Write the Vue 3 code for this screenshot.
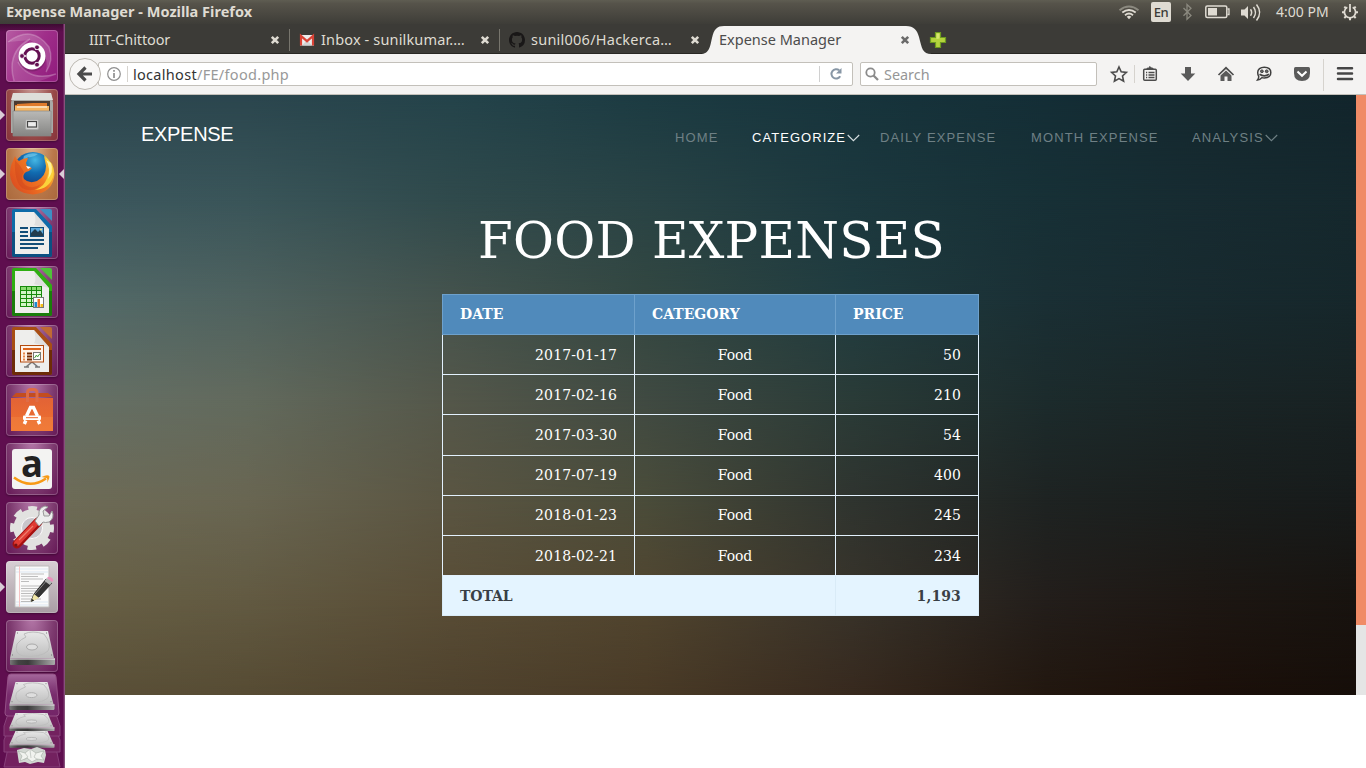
<script setup>
const rows = [
  ['2017-01-17', '50'],
  ['2017-02-16', '210'],
  ['2017-03-30', '54'],
  ['2017-07-19', '400'],
  ['2018-01-23', '245'],
  ['2018-02-21', '234'],
]
const tabs = [
  { title: 'IIIT-Chittoor', icon: '' },
  { title: 'Inbox - sunilkumar.…', icon: 'gmail' },
  { title: 'sunil006/Hackerca…', icon: 'github' },
  { title: 'Expense Manager', icon: '', active: true },
]
const tiles = [
  { name: 'dash' },
  { name: 'files', left: true },
  { name: 'firefox', left: true, right: true },
  { name: 'writer' },
  { name: 'calc' },
  { name: 'impress' },
  { name: 'software' },
  { name: 'amazon' },
  { name: 'settings' },
  { name: 'gedit', left: true },
  { name: 'disk' },
]
const docs = {
  writer: ['#0e6ba8', '#0b4a78', '#3e8fc4'],
  calc: ['#2fae12', '#15700a', '#4fc23a'],
  impress: ['#a84e14', '#5e2404', '#c06a34'],
}
</script>

<template>
  <div class="desktop">
    <header class="panel">
      <span class="window-title">Expense Manager - Mozilla Firefox</span>
      <svg class="tray" width="250" height="24" viewBox="0 0 250 24">
        <g fill="none" stroke-width="1.9">
          <path d="M3.5 10.2Q13 2.8 22.500 10.200" stroke="#8b897f" />
          <path d="M6.300 12.600Q13 7.300 19.700 12.600" stroke="#dfdbd2" />
          <path d="M9 15.200Q13 12 17 15.200" stroke="#dfdbd2" />
        </g>
        <path d="M10.700 16.700Q13 15 15.300 16.700L13 19.200Z" fill="#dfdbd2" />
        <rect x="35" y="2" width="20" height="20" rx="2" fill="#dfdbd2" />
        <path d="M67.500 8L75 15.500L71 19.300V4.500L75 8.300L67.500 15.800" fill="none" stroke="#8b897f" stroke-width="1.300" />
        <rect x="89.800" y="6" width="21" height="11.500" rx="1.500" fill="none" stroke="#dfdbd2" stroke-width="1.500" />
        <rect x="92" y="8" width="9" height="7.500" fill="#dfdbd2" />
        <path d="M111.500 9h1.500v5.500h-1.500" fill="none" stroke="#dfdbd2" stroke-width="1.300" />
        <path d="M125 9.500h3.500L132 6v13l-3.500-3.500H125Z" fill="#dfdbd2" />
        <g fill="none" stroke="#dfdbd2" stroke-width="1.500">
          <path d="M134.500 9.300Q136.800 12.500 134.500 15.700" />
          <path d="M137.500 7Q141.500 12.500 137.500 18" />
          <path d="M140.500 4.500Q146.800 12.500 140.500 20.500" />
        </g>
        <g fill="none" stroke="#dfdbd2">
          <path d="M231.300 7.300A5.600 5.600 0 1 0 236.700 7.300" stroke-width="1.700" />
          <path d="M234 4V12" stroke-width="1.800" />
          <path d="M226 12.300h2.500M239.500 12.300h2.500M228.300 6.600l2 2M239.700 6.600l-2 2M228.300 18l2-2M239.700 18l-2-2M234 17.500v2.700" stroke-width="2" />
        </g>
      </svg>
      <span class="lang">En</span>
      <span class="clock">4:00 PM</span>
    </header>

    <div class="workspace">
      <aside class="launcher">
        <div v-for="t in tiles" :key="t.name" class="tile" :class="t.name">
          <i v-if="t.left" class="pip left"></i>
          <i v-if="t.right" class="pip right"></i>
          <svg width="52" height="52" viewBox="0 0 52 52">
            <template v-if="t.name === 'dash'">
              <g fill="none" stroke="#fff" stroke-opacity=".22" stroke-width="1.500">
                <path d="M2 12Q26 -6 43 17Q48 30 40 42" />
                <path d="M8 51Q0 22 24 9" />
                <path d="M50 44Q24 52 12 32" />
              </g>
              <path d="M2 12Q26 -6 43 17Q48 30 40 42Q44 20 24 10Z" fill="#fff" fill-opacity=".16" />
              <path d="M8 51Q0 22 24 9Q10 22 14 36Q24 50 50 44Q30 56 8 51Z" fill="#fff" fill-opacity=".12" />
              <circle cx="26" cy="27.500" r="14" fill="#000" fill-opacity=".15" />
              <circle cx="26" cy="26" r="13.500" fill="#fff" />
              <circle cx="26" cy="26" r="7.200" fill="none" stroke="#641052" stroke-width="3" />
              <g stroke="#fff" stroke-width="1.300">
                <path d="M20 26h-4M29.500 19.800l2-3.600M29.500 32.200l2 3.600" />
              </g>
              <g fill="#641052" stroke="#fff" stroke-width=".8">
                <circle cx="16" cy="26" r="2.400" /><circle cx="31" cy="17.300" r="2.400" /><circle cx="31" cy="34.700" r="2.400" />
              </g>
            </template>
            <template v-else-if="t.name === 'files'">
              <path d="M7 4h38l2 10v30H5V14Z" fill="#a9a9a6" />
              <path d="M7 4h38l2 7H5Z" fill="#deded9" />
              <rect x="8" y="12" width="36" height="12" fill="#4c3a30" />
              <path d="M11 15l16-1h14v7H9v-5h2Z" fill="#e07a2c" />
              <path d="M9 17h34v5H9Z" fill="#f6b664" />
              <path d="M11 18h30" stroke="#fff" />
              <path d="M7 22h38v25H7Z" fill="url(#grey)" stroke="#868684" stroke-width=".7" />
              <rect x="19.500" y="30.500" width="13" height="10" rx="1.500" fill="#d6d6d4" stroke="#aaa" />
              <rect x="21.500" y="32.500" width="9" height="5.500" fill="#ececec" stroke="#454545" stroke-width="1.200" />
            </template>
            <template v-else-if="t.name === 'firefox'">
              <circle cx="27" cy="24" r="20" fill="url(#globe)" />
              <path d="M18 8Q24 4 32 6Q27 10 22 9Q20 12 17 12Z" fill="#7fd0ef" fill-opacity=".6" />
              <path d="M7 13L9 8Q10 11 13 13Q17 10 22 10L20 15L21 18L26 20Q24 23 20 24Q16 27 18 31Q23 36 31 33Q40 28 40 18L38 8Q48 14 48.500 26Q47 45 27 46.500Q6 45 4 27Q4 18 7 13Z" fill="url(#fox)" />
              <path d="M37 6Q43 13 43 22Q42 31 37 37Q34 40 29 42Q43 41 47 29Q50 17 37 6Z" fill="#fbd23a" />
              <path d="M40 12Q45 20 42 31Q48 24 45 15Z" fill="#fff29a" />
              <path d="M9 12Q14 17 18 24Q13 30 19 37Q27 42 35 36Q28 46 16 40Q8 33 9 12Z" fill="#c93d1b" fill-opacity=".35" />
              <path d="M20 18L25 19L22 21Z" fill="#fff" />
            </template>
            <template v-else-if="docs[t.name]">
              <path d="M8 2h22l16 17v29q0 2-2 2H8q-2 0-2-2V4q0-2 2-2Z" :fill="docs[t.name][0]" />
              <path d="M6 25h40v23q0 2-2 2H8q-2 0-2-2Z" :fill="docs[t.name][1]" fill-opacity=".8" />
              <path d="M34 2h10q2 0 2 2v10Z" :fill="docs[t.name][2]" />
              <path d="M9 5h19l15 17v25H9Z" fill="#eeeeec" />
              <path d="M28 5q3 9 0 13l15 4Z" fill="#cfcfcf" fill-opacity=".5" />
              <g v-if="t.name === 'writer'">
                <path d="M14 21h8M14 25h8M14 29h8M14 33h24M14 37h24M14 41h18" stroke="#124e78" stroke-width="2" />
                <rect x="24.500" y="20.500" width="13" height="9" fill="#5da9dc" stroke="#124e78" />
                <path d="M25 29v-3l4-4 3 3 2-2 3 4v2Z" fill="#243d4d" /><circle cx="35" cy="22.500" r="1" fill="#ffe680" />
              </g>
              <g v-else-if="t.name === 'calc'">
                <rect x="14.500" y="20.500" width="21" height="20" fill="#d2f4c8" stroke="#178a0b" />
                <rect x="15" y="21" width="20" height="3" fill="#8cdc72" />
                <path d="M14 24.500h22M14 28.500h22M14 32.500h22M14 36.500h22M20.500 20v21M25.500 20v21M30.500 20v21" stroke="#178a0b" fill="none" />
                <rect x="27.500" y="31.500" width="10" height="10" fill="#fff" stroke="#777" />
                <rect x="28.500" y="36" width="2.500" height="5" fill="#1b8ad0" /><rect x="31.500" y="33" width="2.500" height="8" fill="#ef7024" /><rect x="34.500" y="38" width="2.500" height="3" fill="#f5bd17" />
              </g>
              <g v-else>
                <path d="M20 42l6-5 6 5M18 42h5M29 42h5" fill="none" stroke="#7a7a7a" stroke-width="1.600" />
                <rect x="14.500" y="20.500" width="23" height="16.500" fill="#fff2e8" stroke="#b34b0e" />
                <path d="M17 24h18" stroke="#dd641b" stroke-width="2" />
                <path d="M17 28.500h2M17 31.500h2M17 34.500h2" stroke="#e88648" stroke-width="2" />
                <path d="M21 28.500h5M21 31.500h5M21 34.500h5" stroke="#762c04" stroke-width="1.800" />
                <rect x="27.500" y="27.500" width="7" height="7" fill="#fff" stroke="#777" />
                <path d="M28.500 33l2-3 1 2 2.500-3.500" fill="none" stroke="#4ba13c" />
              </g>
            </template>
            <template v-else-if="t.name === 'software'">
              <path d="M6 13l4-4h32l5 4Z" fill="#c34d1e" />
              <path d="M5 14h42v33H5Z" fill="url(#bag)" />
              <path d="M5 33h42v14H5Z" fill="#f18745" fill-opacity=".45" />
              <path d="M21.500 18V9Q21.500 5.500 25 5.500h2.500Q31 5.500 31 9v9" fill="none" stroke="#de6c46" stroke-width="3" />
              <path d="M18.300 40L19.800 36.500M33.700 40L32.200 36.500M20.500 32L24.500 23.500h3L31.500 32" fill="none" stroke="#fff" stroke-width="3.400" />
              <rect x="17" y="31.500" width="18" height="4.500" rx="1" fill="#fff" />
              <path d="M20 33.700h12" stroke="#f0662a" />
            </template>
            <template v-else-if="t.name === 'amazon'">
              <rect x="6" y="6" width="40" height="40" rx="3" fill="#f3f3f2" />
              <text x="15" y="33.500" class="amazon-a" textLength="22" lengthAdjust="spacingAndGlyphs">a</text>
              <path d="M8 34.500Q24 46.500 40 35.500" fill="none" stroke="#f79a16" stroke-width="2.500" />
              <path d="M35.500 34Q42 31 43.500 33.500Q43.500 36 41 40Q42 36 40.500 35Z" fill="#f79a16" />
            </template>
            <template v-else-if="t.name === 'settings'">
              <circle cx="26" cy="26" r="14.500" fill="none" stroke="#e2e2e0" stroke-width="8" />
              <circle cx="26" cy="26" r="19.500" fill="none" stroke="#e2e2e0" stroke-width="5" stroke-dasharray="8.600 6.715" stroke-dashoffset="4.300" />
              <circle cx="26" cy="26" r="10.500" fill="#c9c5ca" stroke="#fff" />
              <path d="M11 42L32 20" stroke="#a61010" stroke-width="9" stroke-linecap="round" />
              <path d="M11 41L31 20" stroke="#df3b33" stroke-width="5.500" stroke-linecap="round" />
              <path d="M13 38L27 24" stroke="#ee7d6e" stroke-width="1.300" />
              <path d="M29 19L33 13Q32 6 39 4L42 5L37 9L38 14L43 14L46 9Q49 16 43 20Q39 21 37 20L33 24Z" fill="#eee" stroke="#999" />
              <circle cx="10" cy="43" r="1.500" fill="#751414" />
            </template>
            <template v-else-if="t.name === 'gedit'">
              <path d="M9 5h34v41H9Z" fill="#fafafa" stroke="#bbb" />
              <path d="M10 8h32M10 11h32M10 41h32M10 44h32" stroke="#dce7f2" />
              <path d="M13.500 5v41" stroke="#f5c4c4" />
              <path d="M15 13h23M15 15.500h17M15 18h22M15 20.500h8M15 25h22M15 27.500h18M15 30h20M15 32.500h12M15 35h13M15 38h20M15 40.500h10" stroke="#b5b5b5" stroke-width=".9" />
              <path d="M25 40L28 33L40 18L46 22L33 36Z" fill="#343434" stroke="#111" stroke-width=".7" />
              <path d="M28 33L33 37L25 41Z" fill="#f0e6a5" /><path d="M25 41l1.200-3 2 1.500Z" fill="#222" />
              <path d="M29 33L42 18" stroke="#888" />
              <path d="M38.500 20L41 17L46.500 21L44 24Z" fill="#b7b7b7" />
              <path d="M41 17Q43 14 47 18Q48 20 46 21Z" fill="#eb91bd" />
            </template>
            <template v-else>
              <use href="#drive" />
            </template>
          </svg>
        </div>
        <svg class="folded" width="64" height="96" viewBox="0 0 64 96">
          <defs>
            <linearGradient id="grey" x1="0" y1="0" x2="0" y2="1"><stop offset="0" stop-color="#b9b9b7" /><stop offset="1" stop-color="#858583" /></linearGradient>
            <linearGradient id="bag" x1="0" y1="0" x2="0" y2="1"><stop offset="0" stop-color="#e26336" /><stop offset="1" stop-color="#ef702e" /></linearGradient>
            <radialGradient id="globe" cx=".55" cy=".2" r=".8"><stop offset="0" stop-color="#45b7e4" /><stop offset=".4" stop-color="#116bb0" /><stop offset="1" stop-color="#12286b" /></radialGradient>
            <linearGradient id="fox" x1="0" y1=".8" x2="1" y2=".2"><stop offset="0" stop-color="#db4a20" /><stop offset=".6" stop-color="#f07922" /><stop offset="1" stop-color="#fad43c" /></linearGradient>
            <linearGradient id="metal" x1="0" y1="0" x2="0" y2="1"><stop offset="0" stop-color="#e9e9e9" /><stop offset="1" stop-color="#bdbdbd" /></linearGradient>
            <linearGradient id="edge" x1="0" y1="0" x2="1" y2="0"><stop offset="0" stop-color="#777" /><stop offset=".18" stop-color="#444" /><stop offset=".4" stop-color="#3a3a3a" /><stop offset="1" stop-color="#aaa" /></linearGradient>
            <linearGradient id="sheen" x1="0" y1="0" x2="0" y2="1"><stop offset="0" stop-color="#c896c0" stop-opacity=".65" /><stop offset=".5" stop-color="#96508a" stop-opacity=".4" /><stop offset="1" stop-color="#8e4080" stop-opacity=".35" /></linearGradient>
            <g id="drive">
              <path d="M10 11h32l6 27H4Z" fill="url(#metal)" />
              <path d="M4 38.500h45v5.500q0 1-1 1H5q-1 0-1-1Z" fill="url(#edge)" />
              <path d="M4 39h45" stroke="#f5f5f5" />
              <path d="M18 14Q26 10 38 14Q46 24 42 31Q34 38 17 36Q8 34 11 24Q15 19 20 17Z" fill="none" stroke="#bcbcbc" />
              <ellipse cx="26" cy="27" rx="5.500" ry="3" fill="#dedede" stroke="#aaa" />
              <path d="M11 13h1M40 13h1M6 35h1M45 35h1" stroke="#777" />
            </g>
          </defs>
          <path d="M8 76h48l4 19H4Z" fill="#73215f" stroke="#87407a" />
          <path d="M8 58h48l4 10v12H4V68Z" fill="#73215f" stroke="#87407a" />
          <path d="M8 42h48l4 12v10H4V54Z" fill="#73215f" stroke="#87407a" />
          <path d="M11 2h42q3 0 3 3l3 36q0 3-3 3H8q-3 0-3-3L8 5q0-3 3-3Z" fill="#65155a" />
          <path d="M11 2h42q3 0 3 3l3 36q0 3-3 3H8q-3 0-3-3L8 5q0-3 3-3Z" fill="url(#sheen)" stroke="#955187" />
          <use href="#drive" transform="translate(5.500 1) scale(1 .82)" />
          <use href="#drive" transform="translate(5.500 35.200) scale(1 .53)" />
          <use href="#drive" transform="translate(5.500 53.700) scale(1 .49)" />
          <path d="M17 78l7-2 7 1 6-2 8 3 1 5-2 8-6-1-8 2-5-2-6 1-1-6Z" fill="#d3d8d3" />
          <path d="M18 79l7 2 5-4 6 4 8-2-3 5 3 4-7-1-5 3-5-4-7 3 2-5Z" fill="#f1f3ef" stroke="#a5aca5" stroke-width=".6" />
          <path d="M25 81l3 4-4 3M36 81l-2 4 4 3M30 78l1 8" fill="none" stroke="#b7bdb7" stroke-width=".7" />
        </svg>
      </aside>

      <main class="browser">
        <div class="tabbar">
          <div v-for="(t, i) in tabs" :key="t.title" class="tab" :class="['tab-' + i, { active: t.active }]">
            <svg v-if="t.active" class="tab-shape" width="240" height="30" viewBox="0 0 240 30">
              <path d="M2 30C12 30 12 22 14 14C16 5 19 2 26 2H208C216 2 219 6 221 13C224 24 224 30 234 30Z" fill="#f4f3f2" />
            </svg>
            <svg v-if="t.icon === 'gmail'" class="tab-icon" width="16" height="16" viewBox="0 0 16 16">
              <rect x="1" y="3" width="14" height="10.500" fill="#ededed" />
              <path d="M3 13.500L8 8l5 5.500Z" fill="#d3d3d3" />
              <path d="M2 13.500V4L8 9.200 14 4v9.500" fill="none" stroke="#da4336" stroke-width="2.200" />
            </svg>
            <svg v-if="t.icon === 'github'" class="tab-icon" width="16" height="16" viewBox="0 0 16 16">
              <path fill="#191717" d="M8 0C3.580 0 0 3.580 0 8c0 3.540 2.290 6.530 5.470 7.590.4.070.55-.17.55-.38v-1.490c-2.230.48-2.700-1.070-2.700-1.070-.36-.92-.89-1.170-.89-1.170-.73-.5.050-.49.050-.49.810.06 1.230.83 1.230.83.72 1.230 1.890.87 2.350.67.070-.52.28-.87.510-1.070-1.780-.2-3.650-.89-3.650-3.950 0-.87.310-1.590.83-2.150-.08-.2-.36-1.020.08-2.120 0 0 .67-.22 2.200.82a7.600 7.600 0 0 1 4 0c1.530-1.040 2.200-.82 2.200-.82.44 1.100.16 1.920.08 2.120.51.56.82 1.270.82 2.150 0 3.070-1.870 3.750-3.650 3.950.29.25.54.73.54 1.480v2.200c0 .21.150.46.55.38A8 8 0 0 0 16 8c0-4.420-3.580-8-8-8Z" />
            </svg>
            <span class="tab-title">{{ t.title }}</span>
            <svg class="tab-close" width="10" height="10" viewBox="0 0 10 10"><path d="M1.800 1.800L8.200 8.200M8.200 1.800L1.800 8.200" /></svg>
          </div>
          <svg class="plus" width="18" height="18" viewBox="0 0 18 18">
            <path d="M6.500 1.500h5v5h5v5h-5v5h-5v-5h-5v-5h5Z" fill="#b4d33d" stroke="#6d9a1f" stroke-width="1.200" />
            <path d="M7.500 8V2.500h3V7.500" fill="#d6e66f" />
          </svg>
        </div>

        <div class="toolbar">
          <div class="urlbar">
            <span class="url">localhost<em>/FE/food.php</em></span>
            <span class="url-sep"></span>
            <svg width="16" height="16" viewBox="0 0 16 16">
              <path d="M11.200 4.300A4.700 4.700 0 1 0 12.200 10.300" fill="none" stroke="#8796a5" stroke-width="2" />
              <path d="M13.500 2v5.500H8Z" fill="#8796a5" />
            </svg>
          </div>
          <svg class="back" width="60" height="34" viewBox="0 0 60 34">
            <circle cx="17" cy="17" r="15.500" fill="#f8f7f6" stroke="#bcb8b1" />
            <path d="M24 17H12M17.500 10.500L11 17l6.500 6.500" fill="none" stroke="#4b4b4b" stroke-width="3.200" />
            <circle cx="46" cy="17" r="6.300" fill="none" stroke="#8f8f8f" stroke-width="1.200" />
            <path d="M46 16v5M46 13v1.700" stroke="#8f8f8f" stroke-width="1.700" />
            <path d="M59.500 9v16" stroke="#d6d3ce" />
          </svg>
          <div class="search">
            <svg width="14" height="14" viewBox="0 0 14 14"><circle cx="5.500" cy="5.500" r="4.200" fill="none" stroke="#8b8b8b" stroke-width="1.800" /><path d="M8.500 8.500l4.500 4.500" stroke="#8b8b8b" stroke-width="2.300" /></svg>
            <span>Search</span>
          </div>
          <svg class="tools" width="269" height="40" viewBox="0 0 269 40">
            <path d="M22 13l2.200 4.800 5.200.6-3.900 3.600 1.100 5.200-4.600-2.600-4.600 2.600 1.100-5.200-3.900-3.600 5.200-.6Z" fill="none" stroke="#4c4c4c" stroke-width="1.600" />
            <path d="M37.500 11v18M226.500 5v32" stroke="#d6d3ce" />
            <rect x="46.700" y="15.200" width="12.600" height="11.100" rx="1" fill="#f4f3f2" stroke="#4c4c4c" stroke-width="1.500" />
            <path d="M50 15v-.8h1.300L53 12.500l1.700 1.700H56v.8Z" fill="#4c4c4c" stroke="#4c4c4c" stroke-width="1" />
            <path d="M49 18.500h1.200M49 21h1.200M49 23.500h1.200M51.500 18.500h6M51.500 21h6M51.500 23.500h6" stroke="#4c4c4c" stroke-width="1.300" />
            <path d="M88 13h6v6.500h4.300L91 27l-7.300-7.500H88Z" fill="#5a5a5a" />
            <path d="M121.500 21L129 13.800l7.500 7.200" fill="none" stroke="#4c4c4c" stroke-width="1.700" />
            <path d="M123.500 21.500l5.500-5 5.500 5V27h-4v-4.500h-3V27h-4Z" fill="#5a5a5a" />
            <path d="M167.300 13.200c4 0 6.500 2.200 6.500 5.400s-2.500 5.400-6.500 5.400c-.8 0-1.700-.1-2.400-.4Q163 26 160.500 26q1.500-1.700 1.200-3.700-1-1.500-1-3.700c0-3.200 2.600-5.400 6.600-5.400Z" fill="none" stroke="#3f3f3f" stroke-width="1.500" />
            <circle cx="164.900" cy="17.300" r="1.400" fill="#666" stroke="#444" /><circle cx="169.700" cy="17.300" r="1.400" fill="#666" stroke="#444" />
            <path d="M162.500 20.300Q167.300 23.500 172 20.300" fill="none" stroke="#444" stroke-width="1.800" />
            <path d="M198.500 13h13q1.500 0 1.500 1.500V19q0 8-8 8t-8-8v-4.500q0-1.500 1.500-1.500Z" fill="#5a5a5a" />
            <path d="M200.500 17.500l4.500 4.300 4.500-4.300" fill="none" stroke="#fff" stroke-width="2" />
            <path d="M241 14.300h14M241 19.600h14M241 24.900h14" stroke="#454545" stroke-width="2.500" stroke-linecap="round" />
          </svg>
        </div>

        <div class="viewport">
          <section class="page">
            <div v-for="n in 7" :key="n" class="wash" :class="'wash-' + n"></div>
            <div class="content">
              <nav class="nav">
                <a class="brand">EXPENSE</a>
                <a class="home">HOME</a>
                <a class="categorize">CATEGORIZE<svg width="13" height="8" viewBox="0 0 13 8"><path d="M.7 1l5.700 5.700L12.200 1" /></svg></a>
                <a class="daily">DAILY EXPENSE</a>
                <a class="month">MONTH EXPENSE</a>
                <a class="analysis">ANALYSIS<svg width="13" height="8" viewBox="0 0 13 8"><path d="M.7 1l5.700 5.700L12.200 1" /></svg></a>
              </nav>
              <h1>FOOD EXPENSES</h1>
              <table>
                <colgroup><col class="c1"><col class="c2"><col class="c3"></colgroup>
                <thead>
                  <tr><th>DATE</th><th>CATEGORY</th><th>PRICE</th></tr>
                </thead>
                <tbody>
                  <tr v-for="r in rows" :key="r[0]"><td>{{ r[0] }}</td><td class="mid">Food</td><td>{{ r[1] }}</td></tr>
                </tbody>
                <tfoot>
                  <tr><td colspan="2" class="total">TOTAL</td><td>1,193</td></tr>
                </tfoot>
              </table>
            </div>
          </section>
          <div class="scroll"><div class="thumb"></div></div>
        </div>
      </main>
    </div>
  </div>
</template>

<style>
html, body { margin: 0; overflow: hidden; background: #fff; }
</style>

<style scoped>
* { box-sizing: border-box; }
.desktop { width: 1366px; height: 768px; display: flex; flex-direction: column; font-family: "Noto Sans", "Open Sans", sans-serif; overflow: hidden; background: #fff; }
.panel { position: relative; height: 24px; flex: none; display: flex; align-items: center; justify-content: space-between; background: linear-gradient(#5f5d52, #56534a 15%, #3e3d38); color: #dfdbd2; }
.window-title { padding-left: 6px; font-size: 14.5px; font-weight: 700; line-height: 22px; margin-top: -2px; white-space: nowrap; letter-spacing: .02px; }
.tray { margin-right: 0; }
.lang { position: absolute; left: 1151px; top: 2px; width: 20px; text-align: center; line-height: 20px; font-size: 13px; color: #3c3b37; font-weight: 500; letter-spacing: -.5px; }
.clock { position: absolute; left: 1276px; top: 0; line-height: 24px; font-size: 14px; white-space: nowrap; }

.workspace { flex: 1; display: flex; min-height: 0; }
.launcher { width: 65px; flex: none; display: flex; flex-direction: column; align-items: flex-start; padding: 6px 0 0 6px; gap: 7px; background: linear-gradient(#3e0a33, #5f0e4f 8px); border-right: 1px solid #87507c; box-shadow: inset -1px 0 #6e255f; overflow: hidden; }
.tile { position: relative; width: 52px; height: 52px; flex: none; border-radius: 4px; background: radial-gradient(ellipse at 50% -10%, #b77bab, #7d3a6f 60%, #651856); box-shadow: inset 0 0 0 1px rgba(255, 255, 255, .22), 0 1px 2px rgba(0, 0, 0, .3); }
.tile > svg { display: block; overflow: visible; }
.dash { background: linear-gradient(120deg, #b75ca3, #a02f8a 50%, #8f1a7c); }
.dash > svg { overflow: hidden; }
.files { background: radial-gradient(ellipse at 50% -10%, #c89a94, #984a48 60%, #86323a); }
.firefox { background: radial-gradient(ellipse at 50% -10%, #dfb48c, #b9784a 60%, #a9683c); }
.gedit { background: linear-gradient(#d8cfd4, #a99da4); }
.pip { position: absolute; top: 21px; width: 0; height: 0; border: 5px solid transparent; }
.pip.left { left: -6px; border-left-color: #d9ccd6; border-right: 0; }
.pip.right { right: -6px; border-right-color: #d9ccd6; border-left: 0; }
.amazon-a { font: 700 38px "Open Sans", sans-serif; fill: #222; }
.folded { flex: none; margin: -7px 0 0 -6px; }

.browser { flex: 1; min-width: 0; display: flex; flex-direction: column; }
.tabbar { height: 30px; flex: none; display: flex; padding-left: 15px; background: #3c3b37; box-shadow: inset 0 -1px #282723; }
.tab { position: relative; width: 210px; display: flex; align-items: center; padding: 2px 10px 0 9px; color: #dfdbd2; font-size: 14.5px; }
.tab-1::before, .tab-2::before { content: ""; position: absolute; left: -1px; top: 5px; width: 1px; height: 22px; background: #77756d; }
.tab-icon { margin-right: 6px; flex: none; }
.tab-1 .tab-icon { margin-left: 0; }
.tab-title { flex: 1; white-space: nowrap; position: relative; line-height: 20px; margin-top: -2px; }
.tab-0 .tab-title { letter-spacing: -.12px; }
.tab-1 .tab-title { letter-spacing: .15px; }
.tab-2 .tab-title { letter-spacing: .24px; }
.tab-close { flex: none; position: relative; }
.tab-close path { stroke: #dfdbd2; stroke-width: 2.6; fill: none; }
.active { color: #4c4c4c; }
.active .tab-close path { stroke: #6a6a6a; }
.tab-shape { position: absolute; left: -12px; top: 0; }
.plus { margin: 7px 0 0 9px; }

.toolbar { position: relative; height: 41px; flex: none; display: flex; align-items: center; padding: 0 0 1px 33px; background: #f4f3f2; border-bottom: 1px solid #c3c0ba; }
.back { position: absolute; left: 3px; top: 3px; }
.urlbar { width: 755px; height: 24px; display: flex; align-items: center; background: #fff; border: 1px solid #c3c0ba; border-radius: 2px; padding: 0 8px 0 34px; }
.url { flex: 1; padding-top: 1px; line-height: 20px; font-size: 14.5px; color: #333; letter-spacing: .3px; }
.url em { font-style: normal; color: #999; }
.url-sep { width: 1px; height: 16px; background: #d0d0d0; margin-right: 8px; }
.search { width: 237px; height: 24px; margin-left: 7px; display: flex; align-items: center; background: #fff; border: 1px solid #c3c0ba; border-radius: 2px; padding-left: 4px; font-size: 14.4px; color: #969696; }
.search span { margin-left: 5px; padding-top: 2px; line-height: 20px; }
.tools { flex: none; }

.viewport { height: 600px; flex: none; display: flex; }
.page { position: relative; width: 1291px; height: 600px; overflow: hidden; }
.wash { position: absolute; inset: 0; }
.wash-1 { background: linear-gradient(90deg, #2c464f, #2b464e 14%, #24434a 30%, #1c3b42 45%, #17343c 61%, #142e36 76%, #14282e 88%, #12252c); }
.wash-2 { background: linear-gradient(90deg, #3c575e, #3a5559 14%, #304a4c 30%, #294345 45%, #1c383e 61%, #173036 76%, #172b31 88%, #15282d); mask-image: linear-gradient(transparent 0, #000 105px); }
.wash-3 { background: linear-gradient(90deg, #526a69, #4f625f 14%, #45534d 30%, #334741 45%, #203c40 61%, #1a2f34 76%, #182a2f 88%, #16272b); mask-image: linear-gradient(transparent 105px, #000 205px); }
.wash-4 { background: linear-gradient(90deg, #667066, #626a5d 14%, #54574a 30%, #404a42 45%, #2a3b37 61%, #1c2b2c 76%, #1a2526 88%, #182223); mask-image: linear-gradient(transparent 205px, #000 305px); }
.wash-5 { background: linear-gradient(90deg, #6d6b57, #696652 14%, #5a5542 30%, #4a4c3a 45%, #2f342f 61%, #1e2322 76%, #1a1e1d 88%, #171b1b); mask-image: linear-gradient(transparent 305px, #000 405px); }
.wash-6 { background: linear-gradient(90deg, #686045, #625a42 14%, #594d36 30%, #51452f 45%, #38332a 61%, #231e1b 76%, #1d1713 88%, #18130f); mask-image: linear-gradient(transparent 405px, #000 505px); }
.wash-7 { background: linear-gradient(90deg, #5a5038, #564b33 14%, #4f422d 30%, #493a26 45%, #37291e 61%, #22170f 76%, #1c100a 88%, #160e09); mask-image: linear-gradient(transparent 505px, #000 600px); }
.content { position: relative; color: #fff; }
.nav { height: 86px; display: flex; align-items: flex-start; padding-left: 76px; font: 13px/16px "Liberation Sans", Arial, sans-serif; letter-spacing: 1.15px; color: #6f8085; }
.nav a { margin-top: 35px; white-space: nowrap; flex: none; }
.nav .brand { width: 534px; margin-top: 27px; font-size: 20px; line-height: 24px; color: #fff; letter-spacing: -.3px; }
.nav svg { margin: 0; fill: none; stroke: #6f8085; stroke-width: 1.1; }
.nav .home { width: 77px; }
.nav .categorize { width: 128px; color: #fff; letter-spacing: 1.05px; }
.nav .categorize svg { stroke: #d6dfe1; margin-left: 1px; }
.nav .daily { width: 151px; }
.nav .month { width: 161px; }
.nav .analysis svg { margin-left: 1px; }
h1 { margin: 25px 0 0 413px; font: 400 50px/70px "DejaVu Serif", serif; letter-spacing: .25px; white-space: nowrap; }
table { table-layout: fixed; width: 536px; margin: 18px 0 0 377px; border-collapse: collapse; font: 14px/20px "DejaVu Serif", serif; letter-spacing: .12px; }
.c1 { width: 192px; }
.c2 { width: 201px; }
.c3 { width: 143px; }
tr { height: 40px; }
tbody tr:nth-child(3) { height: 41px; }
td, th { padding: 0 17px; border: 1px solid #e3f1fd; text-align: right; }
tbody tr:nth-child(4) td, tbody tr:nth-child(5) td { padding-bottom: 1px; }
td.mid { text-align: center; letter-spacing: -.1px; }
th { text-align: left; background: #508abb; border-color: #6ea1cc; padding-bottom: 2px; letter-spacing: 0; }
tfoot td { background: #e4f4ff; color: #393f45; font-weight: 700; border-color: #d9ebf7; }
tfoot .total { text-align: left; letter-spacing: -.1px; }
.scroll { width: 10px; height: 600px; background: #e5e5e5; }
.thumb { height: 530px; background: #f08b66; }
</style>
